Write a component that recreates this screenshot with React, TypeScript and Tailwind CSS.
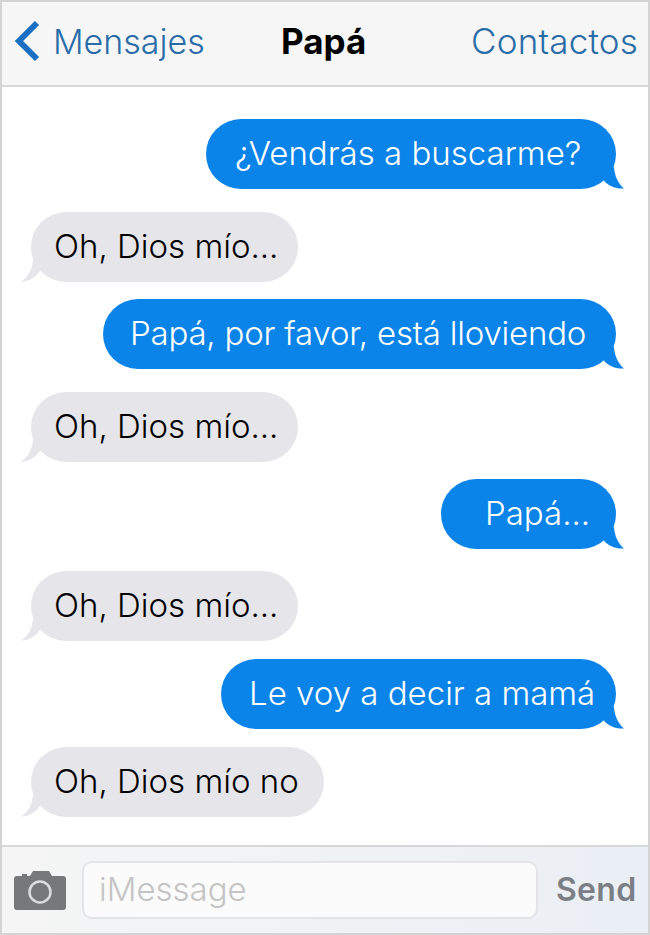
const font = "font-['Inter','Liberation_Sans',sans-serif]";

const messages = [
	{ id: 1, mine: true, text: "¿Vendrás a buscarme?", box: "mt-[32px] w-[410px] pl-[29px]" },
	{ id: 2, mine: false, text: "Oh, Dios mío...", box: "mt-[23px] w-[267px] pl-[23px]" },
	{ id: 3, mine: true, text: "Papá, por favor, está lloviendo", box: "mt-[17px] w-[513px] pl-[27px] tracking-[-0.2px]" },
	{ id: 4, mine: false, text: "Oh, Dios mío...", box: "mt-[23px] w-[267px] pl-[23px]" },
	{ id: 5, mine: true, text: "Papá...", box: "mt-[17px] w-[175px] pl-[44px]" },
	{ id: 6, mine: false, text: "Oh, Dios mío...", box: "mt-[22px] w-[267px] pl-[23px]" },
	{ id: 7, mine: true, text: "Le voy a decir a mamá", box: "mt-[18px] w-[395px] pl-[28px]" },
	{ id: 8, mine: false, text: "Oh, Dios mío no", box: "mt-[18px] w-[293px] pl-[23px]" },
];

function Bubble({ mine, text, box }: { mine: boolean; text: string; box: string }) {
	if (mine) {
		return (
			<div className={`relative self-end mr-[32px] flex h-[70px] items-center rounded-[35px] bg-[#0a84e8] text-[33px] font-light whitespace-nowrap text-white ${box}`}>
				{text}
				<svg className="absolute -right-[8px] bottom-0" width="24" height="24" viewBox="0 0 24 24">
					<path d="M14 2 C14.5 10 18 19 24 23.4 C19 24 12 23 5 17 L0 8 Z" fill="#0a84e8" />
				</svg>
			</div>
		);
	}
	return (
		<div className={`relative self-start ml-[29px] flex h-[70px] items-center rounded-[35px] bg-[#e6e5ea] text-[33px] font-light whitespace-nowrap text-black ${box}`}>
			{text}
			<svg className="absolute -left-[10px] bottom-0" width="24" height="24" viewBox="0 0 24 24">
				<path d="M12 2 C11.5 10 8 19 0 23.3 C6 24 13 21 19 13 L24 6 Z" fill="#e6e5ea" />
			</svg>
		</div>
	);
}

export default function App() {
	return (
		<div className={`flex h-[935px] w-[650px] flex-col overflow-hidden border-x-2 border-y-2 border-[#d4d4d4] bg-white ${font}`}>
			<header className="flex h-[85px] shrink-0 items-center border-b-2 border-[#d8d8d8] bg-[#f6f6f6] pb-[5px] whitespace-nowrap">
				<svg className="ml-[12px]" width="28" height="44" viewBox="0 0 28 44">
					<path d="M23 4 L5 22 L23 40" fill="none" stroke="#1b6fc2" strokeWidth="6" />
				</svg>
				<span className="ml-[11px] w-[228px] text-[34px] font-light text-[#2a6ca8]">Mensajes</span>
				<span className="w-[190px] text-[35px] font-bold text-black">Papá</span>
				<span className="text-[35px] font-light tracking-[0.2px] text-[#2a6ca8]">Contactos</span>
			</header>

			<main className="flex flex-1 flex-col">
				{messages.map((m) => (
					<Bubble key={m.id} mine={m.mine} text={m.text} box={m.box} />
				))}
			</main>

			<footer className="flex h-[88px] shrink-0 items-center border-t-2 border-[#d8d8d8] bg-gradient-to-r from-[#f5f5f5] to-[#eaeff5]">
				<svg className="ml-[12px]" width="52" height="40" viewBox="0 0 52 40">
					<path
						fillRule="evenodd"
						fill="#77787a"
						d="M3 6 H8 V4 H13 V6 H16 L19 1 H35 L38 6 H49 Q52 6 52 9 V37 Q52 40 49 40 H3 Q0 40 0 37 V9 Q0 6 3 6 Z"
					/>
					<circle cx="26" cy="22" r="10.5" fill="#77787a" stroke="#dcdcdc" strokeWidth="2.5" />
				</svg>
				<div className="ml-[16px] flex h-[58px] w-[456px] items-center rounded-[10px] border-2 border-[#e2e4e7] bg-[#fbfbfb] pl-[15px] text-[33px] font-light text-[#c4c4c4]">
					iMessage
				</div>
				<span className="ml-[18px] text-[32px] font-semibold tracking-[0.3px] text-[#7b7f85]">Send</span>
			</footer>
		</div>
	);
}
